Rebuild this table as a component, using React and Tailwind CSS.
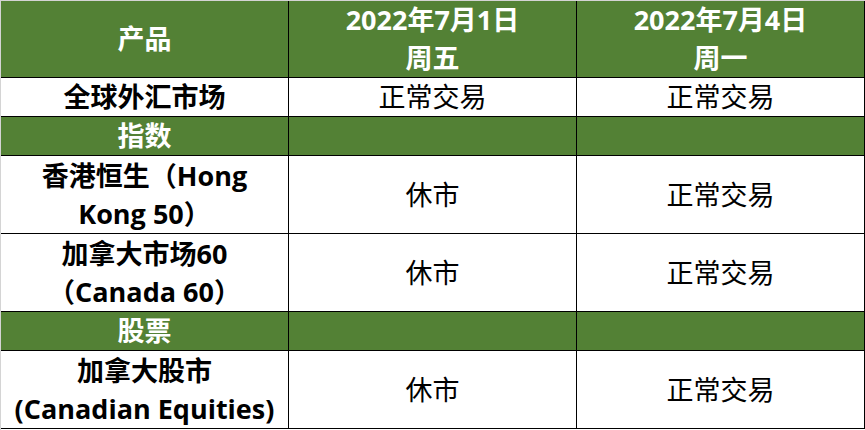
import React from "react";

const font = { fontFamily: '"Open Sans", "Noto Sans CJK SC", sans-serif' };

const Cell = ({ children, kind = "body", bold = false }) => {
    const base = "flex items-center justify-center text-center border-r border-b border-black text-[27px] leading-[38px]";
    if (kind === "green") {
        return <div className={`${base} bg-[#538135] text-white font-bold`}>{children}</div>;
    }
    return <div className={`${base} bg-white text-black ${bold ? "font-bold" : "font-normal"}`}>{children}</div>;
};

const App = () => {
    return (
        <div style={font} className="w-[865px] h-[430px] bg-white border-t border-l border-[#d4d4d4]">
            <div className="grid grid-cols-[288px_288px_288px] grid-rows-[77px_39px_39px_78px_78px_39px_78px]">
                <Cell kind="green">产品</Cell>
                <Cell kind="green">2022年7月1日<br />周五</Cell>
                <Cell kind="green">2022年7月4日<br />周一</Cell>

                <Cell bold>全球外汇市场</Cell>
                <Cell>正常交易</Cell>
                <Cell>正常交易</Cell>

                <Cell kind="green">指数</Cell>
                <Cell kind="green"></Cell>
                <Cell kind="green"></Cell>

                <Cell bold>香港恒生（Hong<br />Kong 50）</Cell>
                <Cell>休市</Cell>
                <Cell>正常交易</Cell>

                <Cell bold>加拿大市场60<br />（Canada 60）</Cell>
                <Cell>休市</Cell>
                <Cell>正常交易</Cell>

                <Cell kind="green">股票</Cell>
                <Cell kind="green"></Cell>
                <Cell kind="green"></Cell>

                <Cell bold>加拿大股市<br />(Canadian Equities)</Cell>
                <Cell>休市</Cell>
                <Cell>正常交易</Cell>
            </div>
        </div>
    );
};

export default App;
